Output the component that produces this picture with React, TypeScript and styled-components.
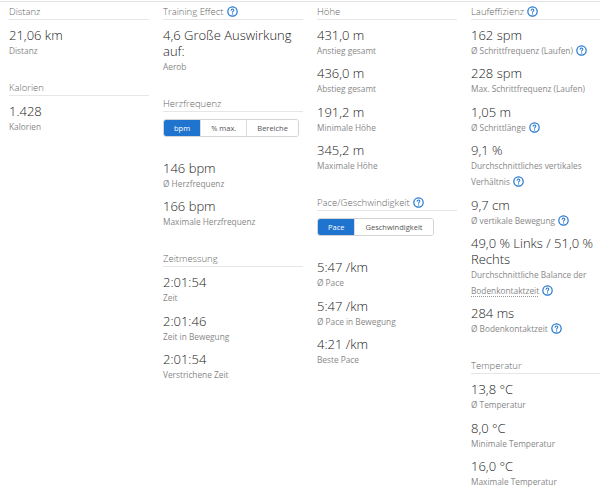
import React from "react";
import styled, { createGlobalStyle } from "styled-components";

const GlobalStyle = createGlobalStyle`
  html, body {
    margin: 0;
    padding: 0;
    background: #ffffff;
  }
  body {
    font-family: "Open Sans", "Liberation Sans", sans-serif;
    color: #333333;
    overflow: hidden;
  }
`;

type Stat = {
  value: string;
  label: string;
  help?: boolean;
  underline?: string;
};

type Section = {
  title: string;
  help?: boolean;
  toggle?: { options: string[]; active: number };
  stats: Stat[];
};

const columns: Section[][] = [
  [
    { title: "Distanz", stats: [{ value: "21,06 km", label: "Distanz" }] },
    { title: "Kalorien", stats: [{ value: "1.428", label: "Kalorien" }] },
  ],
  [
    {
      title: "Training Effect",
      help: true,
      stats: [{ value: "4,6 Große Auswirkung auf:", label: "Aerob" }],
    },
    {
      title: "Herzfrequenz",
      toggle: { options: ["bpm", "% max.", "Bereiche"], active: 0 },
      stats: [
        { value: "146 bpm", label: "Ø Herzfrequenz" },
        { value: "166 bpm", label: "Maximale Herzfrequenz" },
      ],
    },
    {
      title: "Zeitmessung",
      stats: [
        { value: "2:01:54", label: "Zeit" },
        { value: "2:01:46", label: "Zeit in Bewegung" },
        { value: "2:01:54", label: "Verstrichene Zeit" },
      ],
    },
  ],
  [
    {
      title: "Höhe",
      stats: [
        { value: "431,0 m", label: "Anstieg gesamt" },
        { value: "436,0 m", label: "Abstieg gesamt" },
        { value: "191,2 m", label: "Minimale Höhe" },
        { value: "345,2 m", label: "Maximale Höhe" },
      ],
    },
    {
      title: "Pace/Geschwindigkeit",
      help: true,
      toggle: { options: ["Pace", "Geschwindigkeit"], active: 0 },
      stats: [
        { value: "5:47 /km", label: "Ø Pace" },
        { value: "5:47 /km", label: "Ø Pace in Bewegung" },
        { value: "4:21 /km", label: "Beste Pace" },
      ],
    },
  ],
  [
    {
      title: "Laufeffizienz",
      help: true,
      stats: [
        { value: "162 spm", label: "Ø Schrittfrequenz (Laufen)", help: true },
        { value: "228 spm", label: "Max. Schrittfrequenz (Laufen)" },
        { value: "1,05 m", label: "Ø Schrittlänge", help: true },
        {
          value: "9,1 %",
          label: "Durchschnittliches vertikales Verhältnis",
          help: true,
        },
        { value: "9,7 cm", label: "Ø vertikale Bewegung", help: true },
        {
          value: "49,0 % Links / 51,0 % Rechts",
          label: "Durchschnittliche Balance der ",
          underline: "Bodenkontaktzeit",
          help: true,
        },
        { value: "284 ms", label: "Ø Bodenkontaktzeit", help: true },
      ],
    },
    {
      title: "Temperatur",
      stats: [
        { value: "13,8 °C", label: "Ø Temperatur" },
        { value: "8,0 °C", label: "Minimale Temperatur" },
        { value: "16,0 °C", label: "Maximale Temperatur" },
      ],
    },
  ],
];

// small blue "?" help circle used after titles and labels
const HelpIcon = () => (
  <HelpCircle>
    <svg viewBox="0 0 12 12" width="11" height="11">
      <circle cx="6" cy="6" r="5.1" fill="#fff" stroke="#1f74cf" strokeWidth="1.3" />
      <path
        d="M4.5 4.7 C4.5 3.8 5.2 3.3 6 3.3 C6.9 3.3 7.5 3.9 7.5 4.6 C7.5 5.5 6.1 5.6 6.1 6.8"
        fill="none"
        stroke="#1f74cf"
        strokeWidth="1.1"
        strokeLinecap="round"
      />
      <circle cx="6.1" cy="8.6" r="0.7" fill="#1f74cf" />
    </svg>
  </HelpCircle>
);

export default function App() {
  return (
    <>
      <GlobalStyle />
      <Page>
        {columns.map((col, ci) => (
          <Column key={ci}>
            {col.map((section) => (
              <Block key={section.title}>
                <Title>
                  {section.title}
                  {section.help && <HelpIcon />}
                </Title>
                {section.toggle && (
                  <Toggle>
                    {section.toggle.options.map((opt, i) => (
                      <ToggleButton key={opt} $active={i === section.toggle!.active}>
                        {opt}
                      </ToggleButton>
                    ))}
                  </Toggle>
                )}
                <Stats $spaced={!!section.toggle}>
                  {section.stats.map((s, i) => (
                    <Item key={i}>
                      <Value>{s.value}</Value>
                      <Label>
                        {s.label}
                        {s.underline && <Dotted>{s.underline}</Dotted>}
                        {s.help && <HelpIcon />}
                      </Label>
                    </Item>
                  ))}
                </Stats>
              </Block>
            ))}
          </Column>
        ))}
      </Page>
    </>
  );
}

const Page = styled.div`
  border-top: 1px solid #e4e4e4;
  margin-top: 1px;
  padding: 2px 0 0 9px;
  display: grid;
  grid-template-columns: repeat(4, 140px);
  column-gap: 14px;
  height: 486px;
  box-sizing: border-box;
`;

const Column = styled.div`
  display: flex;
  flex-direction: column;
  gap: 21px;
`;

const Block = styled.section`
  display: flex;
  flex-direction: column;
`;

const Title = styled.div`
  font-size: 9.5px;
  font-weight: 300;
  line-height: 15px;
  color: #666666;
  border-bottom: 1px solid #e6e6e6;
  white-space: nowrap;
`;

const HelpCircle = styled.span`
  display: inline-block;
  vertical-align: -2px;
  margin-left: 3px;
  line-height: 0;
`;

const Toggle = styled.div`
  display: flex;
  align-self: flex-start;
  margin-top: 7px;
  height: 18px;
  border: 1px solid #d4d4d4;
  border-radius: 3px;
  overflow: hidden;
  box-sizing: border-box;
`;

const ToggleButton = styled.div<{ $active: boolean }>`
  display: flex;
  align-items: center;
  padding: 0 10px;
  font-size: 7.5px;
  background: ${(p) => (p.$active ? "#1f74cf" : "#ffffff")};
  color: ${(p) => (p.$active ? "#ffffff" : "#555555")};
  & + & {
    border-left: 1px solid #dcdcdc;
  }
`;

const Stats = styled.div<{ $spaced: boolean }>`
  display: flex;
  flex-direction: column;
  gap: 6.4px;
  margin-top: ${(p) => (p.$spaced ? "23px" : "7px")};
`;

const Item = styled.div`
  display: flex;
  flex-direction: column;
`;

const Value = styled.div`
  font-size: 13px;
  font-weight: 300;
  line-height: 16px;
  color: #222222;
`;

const Label = styled.div`
  font-size: 8.3px;
  line-height: 16px;
  color: #888888;
`;

const Dotted = styled.span`
  text-decoration: underline dotted #999999;
  text-underline-offset: 2px;
`;
